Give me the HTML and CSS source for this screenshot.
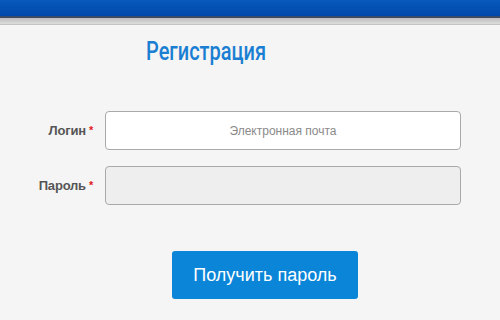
FILE: index.html
```html
<!DOCTYPE html>
<html lang="ru">
<head>
<meta charset="utf-8">
<title>Регистрация</title>
<link rel="stylesheet" href="styles.css">
</head>
<body>
<div class="topbar"></div>
<div class="strip"></div>
<main class="page">
  <h1 class="title">Регистрация</h1>
  <form class="form">
    <div class="row">
      <label class="label">Логин<span class="req">*</span></label>
      <div class="input input-login">Электронная почта</div>
    </div>
    <div class="row">
      <label class="label">Пароль<span class="req">*</span></label>
      <div class="input input-pass"></div>
    </div>
    <div class="actions">
      <button type="button" class="btn">Получить пароль</button>
    </div>
  </form>
</main>
</body>
</html>
```
FILE: styles.css
```css
html, body {
  margin: 0;
  padding: 0;
  background: #f5f5f5;
  font-family: "Liberation Sans", Arial, sans-serif;
}
.topbar {
  height: 16px;
  background: linear-gradient(#0759bb, #0047ab);
  border-bottom: 2px solid #3a4a66;
}
.strip {
  height: 6px;
  background: linear-gradient(#bdbdbd, #dcdcdc);
  border-bottom: 1px solid #c4c4c4;
}
.page {
  display: flex;
  flex-direction: column;
  padding-top: 12px;
}
.title {
  margin: 0 0 0 146px;
  font-family: Roboto, "Liberation Sans", sans-serif;
  font-weight: 500;
  font-size: 25px;
  line-height: 30px;
  color: #1a7fd2;
  transform: scaleX(0.8);
  transform-origin: left center;
}
.form {
  display: flex;
  flex-direction: column;
  gap: 16px;
  margin-top: 44px;
}
.row {
  display: grid;
  grid-template-columns: 105px 356px;
  align-items: center;
}
.label {
  justify-self: end;
  padding-right: 12px;
  font-size: 13px;
  font-weight: bold;
  color: #555;
  letter-spacing: -0.2px;
}
.req {
  color: #e02020;
  font-size: 11px;
  margin-left: 3px;
  vertical-align: 1px;
}
.input {
  height: 37px;
  border: 1px solid #a9a9a9;
  border-radius: 4px;
  box-sizing: content-box;
  display: flex;
  align-items: center;
  justify-content: center;
  font-size: 12px;
  color: #8a8a8a;
}
.input-login { background: #fff; }
.input-pass { background: #eeeeee; }
.actions {
  display: flex;
  margin-top: 30px;
  padding-left: 172px;
}
.btn {
  width: 186px;
  height: 48px;
  border: 0;
  border-radius: 3px;
  background: #0a85d8;
  color: #fff;
  font-family: "Liberation Sans", Arial, sans-serif;
  font-size: 18px;
  padding: 0;
}
```
